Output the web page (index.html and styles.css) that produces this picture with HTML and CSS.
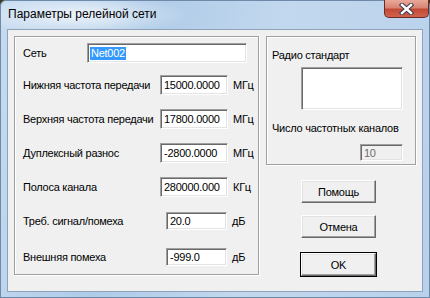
FILE: index.html
```html
<!DOCTYPE html>
<html lang="ru">
<head>
    <meta charset="UTF-8">
    <title>Параметры релейной сети</title>
    <link rel="stylesheet" href="styles.css">
</head>
<body>
    <div class="window">
        <div class="titlebar">
            <span class="title">Параметры релейной сети</span>
            <div class="close">
                <svg width="15" height="12" viewBox="0 0 15 12">
                    <path d="M3 2 L12 10 M12 2 L3 10" stroke="#3b3b4a" stroke-width="4.4" stroke-linecap="square"/>
                    <path d="M3 2 L12 10 M12 2 L3 10" stroke="#ffffff" stroke-width="2.4" stroke-linecap="square"/>
                </svg>
            </div>
        </div>
        <div class="client">
            <div class="group main-group">
                <div class="row row-first">
                    <span class="lbl lbl-net">Сеть</span>
                    <div class="edit edit-net"><span class="sel">Net002</span></div>
                </div>
                <div class="row">
                    <span class="lbl">Нижняя частота передачи</span>
                    <div class="edit edit-num">15000.0000</div>
                    <span class="unit">МГц</span>
                </div>
                <div class="row">
                    <span class="lbl">Верхняя частота передачи</span>
                    <div class="edit edit-num">17800.0000</div>
                    <span class="unit">МГц</span>
                </div>
                <div class="row">
                    <span class="lbl">Дуплексный разнос</span>
                    <div class="edit edit-num">-2800.0000</div>
                    <span class="unit">МГц</span>
                </div>
                <div class="row">
                    <span class="lbl">Полоса канала</span>
                    <div class="edit edit-num">280000.000</div>
                    <span class="unit">КГц</span>
                </div>
                <div class="row">
                    <span class="lbl">Треб. сигнал/помеха</span>
                    <div class="edit edit-db">20.0</div>
                    <span class="unit">дБ</span>
                </div>
                <div class="row row-last">
                    <span class="lbl">Внешняя помеха</span>
                    <div class="edit edit-db">-999.0</div>
                    <span class="unit">дБ</span>
                </div>
            </div>
            <div class="side">
                <div class="group radio-group">
                    <span class="caption">Радио стандарт</span>
                    <div class="edit edit-list"></div>
                    <span class="caption caption-ch">Число частотных каналов</span>
                    <div class="edit edit-off">10</div>
                </div>
                <div class="buttons">
                    <div class="btn">Помощь</div>
                    <div class="btn">Отмена</div>
                    <div class="btn btn-default">OK</div>
                </div>
            </div>
        </div>
    </div>
</body>
</html>
```

FILE: styles.css
```css
body {
    margin: 0;
    width: 430px;
    height: 298px;
    background: #3a3a20;
    font-family: "Liberation Sans", Arial, sans-serif;
    font-size: 11px;
    letter-spacing: -0.25px;
    color: #000;
    overflow: hidden;
}
.window {
    box-sizing: border-box;
    width: 430px;
    height: 298px;
    padding: 0 7px 6px 7px;
    border-radius: 6px 6px 0 0;
    background:
        radial-gradient(ellipse 110px 22px at 80px 15px, rgba(255, 255, 255, 0.75), rgba(255, 255, 255, 0) 100%),
        linear-gradient(100deg, #c6dbf0 0%, #aecbe8 30%, #c2d8ee 60%, #b8d1eb 100%);
    box-shadow: inset 0 0 0 1px #6f8aa8;
    display: flex;
    flex-direction: column;
}
.titlebar {
    height: 29px;
    display: flex;
    align-items: flex-start;
    justify-content: space-between;
}
.title {
    margin-top: 7px;
    margin-left: 1px;
    font-size: 12px;
    letter-spacing: 0;
}
.close {
    width: 45px;
    height: 18px;
    margin-right: -6px;
    box-sizing: border-box;
    border: 1px solid #6b2a24;
    border-top: none;
    border-radius: 0 0 5px 5px;
    background: linear-gradient(#e9a99b 0%, #d98472 45%, #c24a35 55%, #d0634d 100%);
    display: flex;
    align-items: center;
    justify-content: center;
}
.client {
    flex: 1;
    border: 1px solid #8ea2b8;
    background: #f0f0f0;
    display: flex;
    align-items: flex-start;
    gap: 7px;
    padding: 6px 0 0 6px;
}
.group {
    box-sizing: border-box;
    border: 1px solid #a0a0a0;
    box-shadow: inset 1px 1px #fff, 1px 1px #fff;
}
.main-group {
    width: 245px;
    height: 239px;
    padding-top: 1px;
}
.row {
    height: 34px;
    display: flex;
    align-items: center;
}
.row-first {
    height: 30px;
}
.row-last {
    margin-top: 2px;
}
.lbl {
    width: 137px;
    padding-left: 8px;
    white-space: nowrap;
}
.lbl-net {
    width: 64px;
}
.unit {
    margin-left: 5px;
}
.edit {
    box-sizing: border-box;
    height: 20px;
    background: #fff;
    border: 1px solid;
    border-color: #a0a0a0 #fff #fff #a0a0a0;
    box-shadow: inset 1px 1px #696969, inset -1px -1px #e3e3e3;
    padding: 3px 2px 0 3px;
    line-height: 13px;
    white-space: nowrap;
    overflow: hidden;
}
.edit-net {
    width: 160px;
}
.sel {
    background: #3399ff;
    color: #fff;
    display: inline-block;
    padding: 0 1px;
    margin-left: -1px;
}
.edit-num {
    width: 68px;
}
.edit-db {
    width: 61px;
    height: 18px;
    margin-left: 6px;
    padding-top: 2px;
}
.side {
    width: 150px;
    display: flex;
    flex-direction: column;
}
.radio-group {
    height: 129px;
    padding: 12px 0 0 5px;
    display: flex;
    flex-direction: column;
}
.caption {
    height: 13px;
}
.edit-list {
    width: 102px;
    height: 43px;
    margin: 5px 0 0 29px;
}
.caption-ch {
    margin-top: 12px;
}
.edit-off {
    width: 43px;
    height: 17px;
    margin: 9px 0 0 88px;
    padding-top: 2px;
    background: #f0f0f0;
    color: #6d6d6d;
}
.buttons {
    display: flex;
    flex-direction: column;
    gap: 12px;
    padding: 15px 0 0 35px;
}
.btn {
    box-sizing: border-box;
    width: 75px;
    height: 23px;
    background: #f0f0f0;
    border: 1px solid;
    border-color: #fff #696969 #696969 #fff;
    box-shadow: inset -1px -1px #a0a0a0, inset 1px 1px #e3e3e3;
    display: flex;
    align-items: center;
    justify-content: center;
}
.btn-default {
    margin-top: 3px;
    outline: 1px solid #000;
}
```
